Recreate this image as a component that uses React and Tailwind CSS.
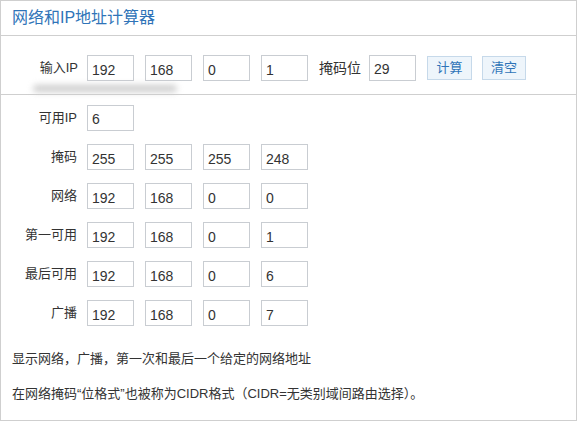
import React from 'react';

const font = { fontFamily: '"Liberation Sans", Arial, "Noto Sans CJK SC", sans-serif' };

const Field = ({ value }) => (
  <input
    readOnly
    value={value}
    className="w-[47px] h-[26px] border border-[#c9cdd2] bg-white px-[4px] pt-[3px] text-[14px] text-[#333] outline-none"
  />
);

const rows = [
  { label: '掩码', values: ['255', '255', '255', '248'] },
  { label: '网络', values: ['192', '168', '0', '0'] },
  { label: '第一可用', values: ['192', '168', '0', '1'] },
  { label: '最后可用', values: ['192', '168', '0', '6'] },
  { label: '广播', values: ['192', '168', '0', '7'] },
];

const App = () => {
  return (
    <div className="w-[578px] h-[422px] bg-white" style={font}>
      <div className="w-[577px] h-[421px] border border-[#cfcfcf] text-[#333]">
        <div className="h-[35px] border-b border-[#cfcfcf] pl-[11px] flex items-center">
          <h1 className="text-[16px] text-[#2f74b8] leading-none">网络和IP地址计算器</h1>
        </div>

        <div className="relative h-[59px] border-b border-[#cfcfcf] flex items-center pt-[6px]">
          <span className="w-[77px] text-right text-[13px]">输入IP</span>
          <div className="flex gap-[11px] ml-[9px]">
            <Field value="192" />
            <Field value="168" />
            <Field value="0" />
            <Field value="1" />
          </div>
          <span className="ml-[11px] w-[46px] text-[14px]">掩码位</span>
          <div className="ml-[4px]">
            <Field value="29" />
          </div>
          <button className="ml-[11px] h-[24px] w-[45px] border border-[#c6d9ea] bg-[#eef5fb] text-[13px] text-[#2f74b8]">
            计算
          </button>
          <button className="ml-[10px] h-[24px] w-[44px] border border-[#c6d9ea] bg-[#eef5fb] text-[13px] text-[#2f74b8]">
            清空
          </button>
          <div className="absolute left-[32px] top-[49px] h-[7px] w-[144px] rounded-full bg-[#cdcdcd] blur-[3px]" />
        </div>

        <div className="pt-[10px] flex flex-col gap-[13px]">
          <div className="h-[26px] flex items-center">
            <span className="w-[76px] text-right text-[13px]">可用IP</span>
            <div className="ml-[10px]">
              <Field value="6" />
            </div>
          </div>
          {rows.map((row) => (
            <div key={row.label} className="h-[26px] flex items-center">
              <span className="w-[76px] text-right text-[13px]">{row.label}</span>
              <div className="flex gap-[11px] ml-[10px]">
                {row.values.map((v, i) => (
                  <Field key={i} value={v} />
                ))}
              </div>
            </div>
          ))}
        </div>

        <div className="pl-[11px] pt-[23px] text-[13px] flex flex-col gap-[15px]">
          <p>显示网络，广播，第一次和最后一个给定的网络地址</p>
          <p>在网络掩码“位格式”也被称为CIDR格式（CIDR=无类别域间路由选择）。</p>
        </div>
      </div>
    </div>
  );
};

export default App;
